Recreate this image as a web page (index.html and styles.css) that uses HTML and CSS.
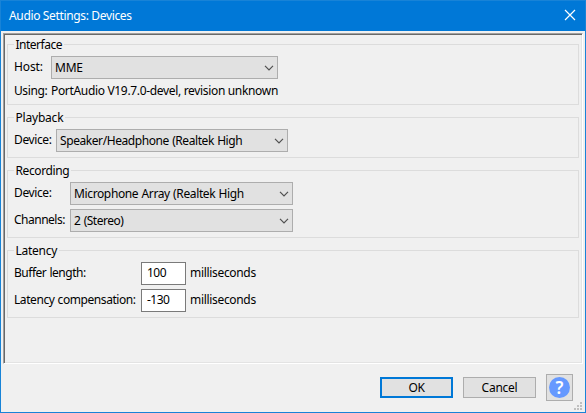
FILE: index.html
```html
<!DOCTYPE html>
<html lang="en">
<head>
<meta charset="utf-8">
<title>Audio Settings: Devices</title>
<link rel="stylesheet" href="styles.css">
</head>
<body>
<div class="window">
  <header class="titlebar">
    <span class="t-title">Audio Settings: Devices</span>
    <svg class="close" width="12" height="12" viewBox="0 0 12 12"><path d="M1 1L11 11M11 1L1 11"/></svg>
  </header>
  <main class="panel">
    <section class="group interface">
      <h2><span class="t-interface">Interface</span></h2>
      <div class="row"><label class="t-host">Host:</label>
        <div class="select"><span class="t-mme">MME</span><svg width="10" height="6" viewBox="0 0 10 6"><path d="M1 .8L5 4.8L9 .8"/></svg></div></div>
      <div class="row using"><label class="t-using">Using:</label><span class="t-version">PortAudio V19.7.0-devel, revision unknown</span></div>
    </section>
    <section class="group playback">
      <h2><span class="t-playback">Playback</span></h2>
      <div class="row"><label class="t-device">Device:</label>
        <div class="select"><span class="t-speaker">Speaker/Headphone (Realtek High</span><svg width="10" height="6" viewBox="0 0 10 6"><path d="M1 .8L5 4.8L9 .8"/></svg></div></div>
    </section>
    <section class="group recording">
      <h2><span class="t-recording">Recording</span></h2>
      <div class="row"><label class="t-device">Device:</label>
        <div class="select"><span class="t-mic">Microphone Array (Realtek High</span><svg width="10" height="6" viewBox="0 0 10 6"><path d="M1 .8L5 4.8L9 .8"/></svg></div></div>
      <div class="row"><label class="t-channels">Channels:</label>
        <div class="select"><span class="t-stereo">2 (Stereo)</span><svg width="10" height="6" viewBox="0 0 10 6"><path d="M1 .8L5 4.8L9 .8"/></svg></div></div>
    </section>
    <section class="group latency">
      <h2><span class="t-latency">Latency</span></h2>
      <div class="row"><label class="t-buffer">Buffer length:</label><div class="field"><span class="t-num">100</span></div><span class="t-ms">milliseconds</span></div>
      <div class="row"><label class="t-comp">Latency compensation:</label><div class="field"><span class="t-num">-130</span></div><span class="t-ms">milliseconds</span></div>
    </section>
  </main>
  <footer class="actions">
    <div class="button primary"><span class="t-ok">OK</span></div>
    <div class="button"><span class="t-cancel">Cancel</span></div>
    <div class="help"><span>?</span></div>
  </footer>
  <svg class="grip" width="8" height="8" viewBox="0 0 8 8"><path d="M6 0h2v2H6zM3 3h2v2H3zM6 3h2v2H6zM0 6h2v2H0zM3 6h2v2H3zM6 6h2v2H6z"/></svg>
</div>
</body>
</html>
```
FILE: styles.css
```css
* { box-sizing: border-box; }
body { margin: 0; font: 12px/16px "Noto Sans", sans-serif; color: #000; }
.window {
  position: relative;
  width: 586px;
  height: 413px;
  border: 1px solid #1883d7;
  background: #f0f0f0;
  display: flex;
  flex-direction: column;
}
.window span, .window label { white-space: nowrap; }
.titlebar {
  height: 30px;
  background: #0078d7;
  color: #fff;
  display: flex;
  justify-content: space-between;
  align-items: center;
  padding: 0 9px 2px 8px;
}
.titlebar span { padding-top: 2px; }
.close { fill: none; stroke: #fff; stroke-width: 1.2; }
.panel {
  margin: 2px 2px 0;
  width: 580px;
  height: 331px;
  border: 1px solid;
  border-color: #a0a0a0 #fff #fff #a0a0a0;
  box-shadow: inset 1px 1px #696969, inset -1px -1px #e3e3e3;
  padding: 10px 3px 0;
}
.group { width: 572px; border: 1px solid #dcdcdc; padding-left: 6px; }
.group h2 {
  margin: -8px 0 0;
  width: max-content;
  padding: 0 2px 0 1.5px;
  height: 16px;
  font: inherit;
  background: #f0f0f0;
}
.row { display: flex; align-items: center; height: 23px; }
.row label { flex: none; }
.row > label, .row > .t-ms { padding-bottom: 1px; }
.row.using > label { padding-bottom: 0; }
.group h2 + .row { margin-top: 3px; }
.interface { height: 61px; }
.playback { height: 41px; margin-top: 12px; }
.recording { height: 68px; margin-top: 12px; }
.latency { height: 68px; margin-top: 12px; }
.interface label { width: 37px; }
.playback label { width: 42px; }
.recording label { width: 56px; }
.latency label { width: 127px; }
.recording .row + .row, .latency .row + .row { margin-top: 4px; }
.using { height: 24px; }
.select {
  width: 227px;
  height: 23px;
  border: 1px solid #adadad;
  background: #e1e1e1;
  display: flex;
  align-items: center;
  justify-content: space-between;
  padding: 0 3px;
}
.playback .select { width: 232px; }
.recording .select { width: 223px; }
.select svg { fill: none; stroke: #505050; stroke-width: 1.2; }
.field {
  width: 45px;
  height: 23px;
  border: 1px solid #7a7a7a;
  background: #fff;
  padding: 2px 0 0 5px;
  margin-right: 4px;
}
.actions { display: flex; justify-content: flex-end; align-items: center; gap: 10px; height: 27px; margin-top: 10px; padding-right: 12px; }
.button {
  width: 73px;
  height: 21px;
  border: 1px solid #adadad;
  background: #e1e1e1;
  display: flex;
  align-items: center;
  justify-content: center;
}
.primary { border: 2px solid #0078d7; }
.help { width: 27px; height: 27px; border: 1px solid #adadad; background: #e1e1e1; padding: 2px; }
.help span { display: block; width: 21px; height: 21px; border-radius: 50%; background: #6699ff; color: #fff; font-size: 17px; line-height: 22px; font-weight: 600; text-align: center; }
.grip { position: absolute; right: 3px; bottom: 2px; fill: #bfbfbf; }

.t-title { letter-spacing: -.35px; }
.t-interface { letter-spacing: -.5px; }
.t-host { letter-spacing: -.1px; }
.t-mme { letter-spacing: -.2px; }
.t-using { letter-spacing: -.4px; }
.t-version { letter-spacing: -.33px; }
.t-playback { letter-spacing: -.2px; }
.t-device { letter-spacing: -.38px; }
.t-speaker { letter-spacing: -.42px; word-spacing: .5px; }
.t-recording { letter-spacing: -.4px; }
.t-mic { letter-spacing: -.37px; word-spacing: .5px; }
.t-channels { letter-spacing: -.5px; }
.t-stereo { letter-spacing: -.5px; word-spacing: .7px; }
.t-latency { letter-spacing: -.25px; }
.t-buffer { letter-spacing: -.48px; word-spacing: .5px; }
.t-comp { letter-spacing: -.43px; word-spacing: .5px; }
.t-ms { letter-spacing: -.32px; }
.t-num { letter-spacing: -.5px; }
.t-ok { letter-spacing: -.3px; }
.t-cancel { letter-spacing: -.25px; }
```
